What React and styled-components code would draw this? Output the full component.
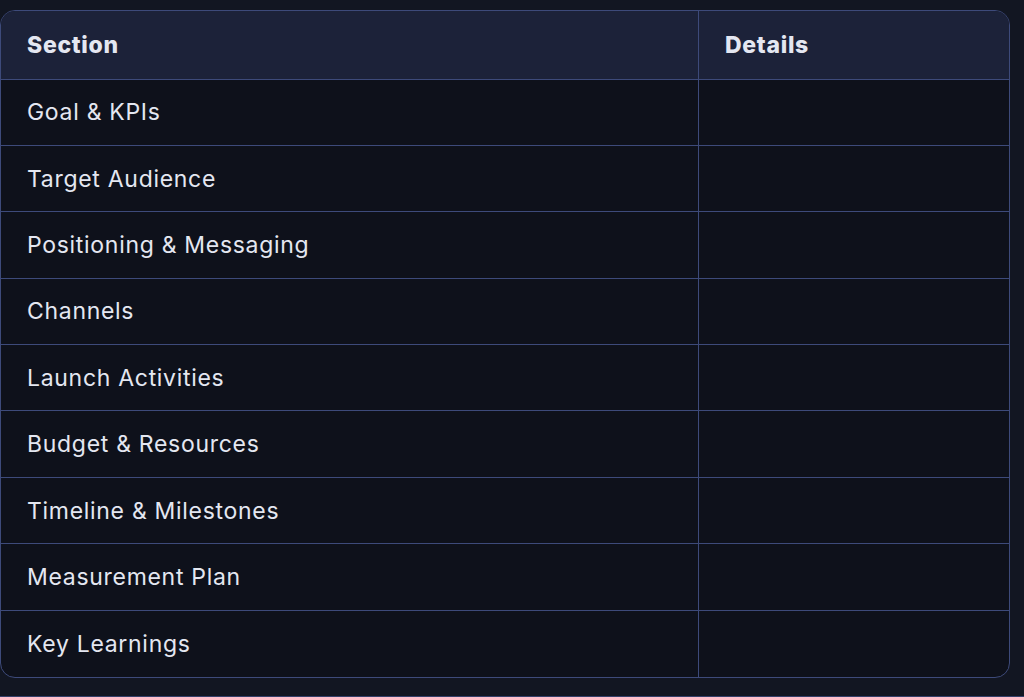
import React from 'react';
import styled, { createGlobalStyle } from 'styled-components';

const GlobalStyle = createGlobalStyle`
  html, body {
    margin: 0;
    padding: 0;
    background: #121622;
  }
  * {
    box-sizing: border-box;
  }
`;

const Page = styled.div`
  width: 1024px;
  height: 697px;
  padding: 10px 14px 0 0;
  border-bottom: 1px solid #34406a;
  font-family: Inter, 'Noto Sans', sans-serif;
`;

const Table = styled.div`
  display: grid;
  grid-template-columns: 698px 1fr;
  grid-template-rows: 68.5px repeat(9, 1fr);
  height: 668px;
  border: 1.5px solid #3d4a7a;
  border-radius: 15px;
  overflow: hidden;
  background: #0e111b;
`;

const Cell = styled.div`
  display: flex;
  align-items: center;
  padding-left: 26px;
  color: #e4e7f1;
  font-size: 23px;
  letter-spacing: 0.7px;
  font-weight: ${p => (p.$head ? 800 : 400)};
  background: ${p => (p.$head ? '#1c2239' : 'transparent')};
  border-right: ${p => (p.$last ? 'none' : '1.5px solid #3d4a7a')};
  border-bottom: ${p => (p.$bottom ? 'none' : '1.5px solid #3d4a7a')};
`;

const sections = [
  'Goal & KPIs',
  'Target Audience',
  'Positioning & Messaging',
  'Channels',
  'Launch Activities',
  'Budget & Resources',
  'Timeline & Milestones',
  'Measurement Plan',
  'Key Learnings',
];

export default function App() {
  return (
    <>
      <GlobalStyle />
      <Page>
        <Table>
          <Cell $head>Section</Cell>
          <Cell $head $last>Details</Cell>
          {sections.map((s, i) => (
            <React.Fragment key={s}>
              <Cell $bottom={i === sections.length - 1}>{s}</Cell>
              <Cell $last $bottom={i === sections.length - 1} />
            </React.Fragment>
          ))}
        </Table>
      </Page>
    </>
  );
}
